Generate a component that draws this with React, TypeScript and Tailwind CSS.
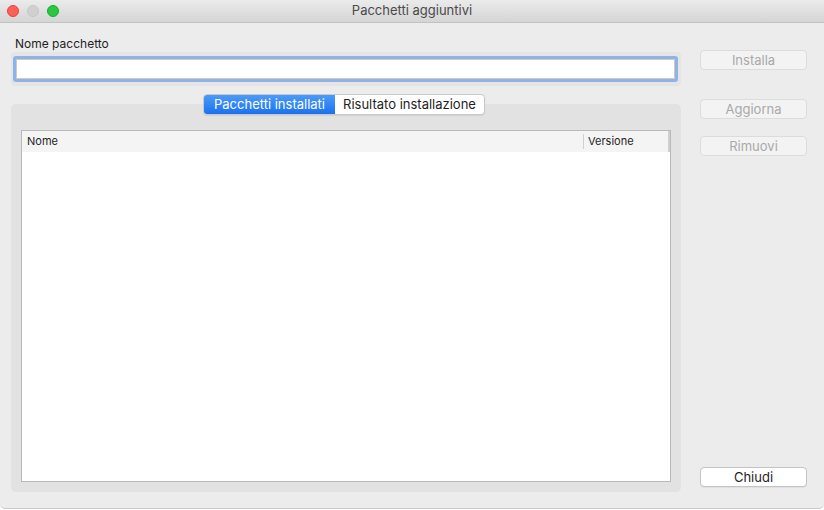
import React from "react";

const font = { fontFamily: "Inter, 'Noto Sans', sans-serif" };

function Btn({ label, disabled }: { label: string; disabled?: boolean }) {
  return (
    <button
      className={
        disabled
          ? "h-[20px] w-[107px] rounded-[4px] border border-[#dcdcdc] bg-[#f3f3f3] text-[13px] leading-none text-[#a9a9a9]"
          : "h-[20px] w-[107px] rounded-[4px] border border-[#c4c4c4] bg-white text-[13px] leading-none text-[#1e1e1e] shadow-[0_1px_0_rgba(0,0,0,0.05)]"
      }
    >
      {label}
    </button>
  );
}

export default function App() {
  return (
    <div className="w-[824px] h-[510px] overflow-hidden bg-white" style={font}>
      <div className="flex h-[509px] flex-col rounded-b-[5px] border-b border-[#c9c9c9] bg-[#ececec]">
        {/* title bar */}
        <div className="relative flex h-[23px] shrink-0 items-center justify-center border-b border-[#c2c2c2] bg-gradient-to-b from-[#ebebeb] to-[#d5d5d5]">
          <div className="absolute left-[7px] top-[5px] flex gap-[8px]">
            <span className="h-[12px] w-[12px] rounded-full border border-[#e0443e] bg-[#fe5f57]" />
            <span className="h-[12px] w-[12px] rounded-full border border-[#c6c6c6] bg-[#d0d0d0]" />
            <span className="h-[12px] w-[12px] rounded-full border border-[#1aab29] bg-[#28c840]" />
          </div>
          <span className="text-[13px] text-[#4a4a4a]">Pacchetti aggiuntivi</span>
        </div>

        <div className="flex flex-1 gap-[19px] pl-[11px] pr-[17px] pt-[13px] pb-[16px]">
          {/* left column */}
          <div className="flex w-[670px] flex-col">
            <div className="pl-[4px] text-[12px] leading-[15px] text-[#1e1e1e]">Nome pacchetto</div>
            <div className="mt-[1px] rounded-[4px] bg-[#e5e5e5] px-[2px] py-[4px]">
              <div className="h-[26px] w-[665px] rounded-[3px] border-[3px] border-[#8eb3ea] bg-white shadow-[inset_0_0_0_1px_#d7c9b8]" />
            </div>

            <div className="relative mt-[18px] flex-1 rounded-[5px] bg-[#e2e2e2] px-[10px] pb-[10px] pt-[26px]">
              {/* segmented control */}
              <div className="absolute left-[192px] top-[-10px] flex h-[21px] overflow-hidden rounded-[4px] border border-[#c9c9c9] bg-white text-[13px] shadow-[0_1px_1px_rgba(0,0,0,0.08)]">
                <div className="flex w-[131px] items-center justify-center bg-gradient-to-b from-[#4a9bf8] to-[#1a71ee] text-white">
                  Pacchetti installati
                </div>
                <div className="flex w-[149px] items-center justify-center text-[#1e1e1e]">
                  Risultato installazione
                </div>
              </div>

              {/* table */}
              <div className="flex h-full flex-col border border-[#b9b9b9] bg-white">
                <div className="flex h-[21px] shrink-0 items-center bg-[#f4f4f4] text-[11px] text-[#1e1e1e]">
                  <div className="flex-1 pl-[5px]">Nome</div>
                  <div className="h-[15px] w-px bg-[#cfcfcf]" />
                  <div className="w-[84px] pl-[4px]">Versione</div>
                  <div className="h-full w-[2px] bg-[#cfcfcf]" />
                </div>
                <div className="flex-1 bg-white" />
              </div>
            </div>
          </div>

          {/* right column */}
          <div className="flex flex-col pt-[14px] pb-[5px]">
            <Btn label="Installa" disabled />
            <div className="h-[29px]" />
            <Btn label="Aggiorna" disabled />
            <div className="h-[17px]" />
            <Btn label="Rimuovi" disabled />
            <div className="flex-1" />
            <Btn label="Chiudi" />
          </div>
        </div>
      </div>
    </div>
  );
}
